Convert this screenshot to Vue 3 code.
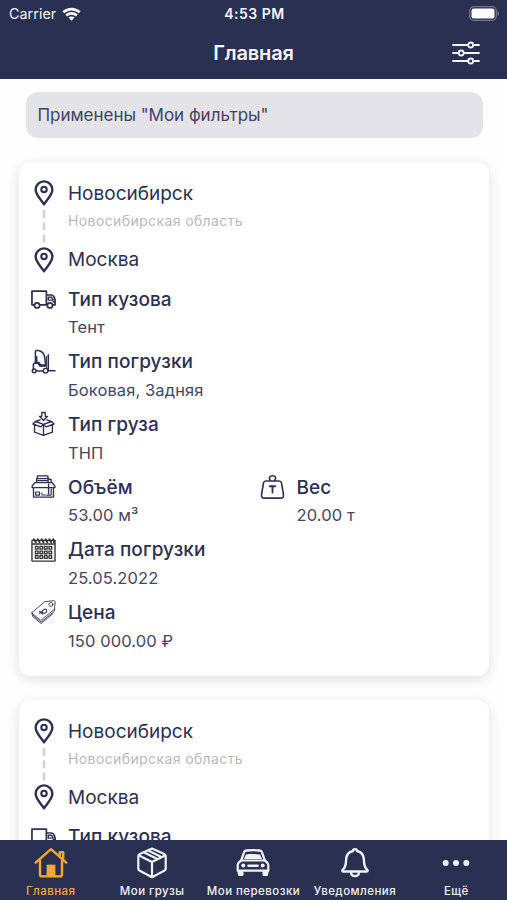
<script setup>
const cards = [1, 2]

const rows = [
  [{ icon: 'truck', label: 'Тип кузова', value: 'Тент' }],
  [{ icon: 'forklift', label: 'Тип погрузки', value: 'Боковая, Задняя' }],
  [{ icon: 'cargo', label: 'Тип груза', value: 'ТНП' }],
  [
    { icon: 'volume', label: 'Объём', value: '53.00 м³' },
    { icon: 'weight', label: 'Вес', value: '20.00 т' },
  ],
  [{ icon: 'calendar', label: 'Дата погрузки', value: '25.05.2022' }],
  [{ icon: 'price', label: 'Цена', value: '150 000.00 ₽' }],
]

const tabs = [
  { icon: 'home', label: 'Главная', active: true },
  { icon: 'box', label: 'Мои грузы' },
  { icon: 'car', label: 'Мои перевозки' },
  { icon: 'bell', label: 'Уведомления' },
  { icon: 'more', label: 'Ещё' },
]

// The last card runs under the tab bar, so only its first row is rendered.
const rowsOf = (card) => (card === cards.length ? rows.slice(0, 1) : rows)
</script>

<template>
  <div class="screen">
    <svg class="sprite" aria-hidden="true">
      <symbol id="pin" viewBox="0 0 20 26">
        <path d="M10 24.2C6.8 19.6 1.6 14.4 1.6 9.8a8.4 8.4 0 0 1 16.8 0c0 4.600-5.200 9.800-8.400 14.400z" stroke-width="2.4" />
        <circle cx="10" cy="9.400" r="2.700" stroke-width="2.1" />
      </symbol>
      <symbol id="truck" viewBox="0 0 26 26">
        <path d="M3.600 18H1V3.800h15V18H9M16 7.800h5.300c1.800 0 3.700 3 3.700 5.200V18h-2.300M16 18h.8" />
        <path d="M18 10.200h3.500l1.600 2.900H18zM23 14.800h2" stroke-width="1.500" />
        <circle cx="6.300" cy="18.600" r="2.700" />
        <circle cx="19.700" cy="18.600" r="2.700" />
      </symbol>
      <symbol id="forklift" viewBox="0 0 26 26">
        <path d="M4.600 14V2.200C4.600 1 6 .8 7.600 1c4 .6 6 3.200 6.600 7l1 8.300" stroke-width="1.600" />
        <path d="M3 14.200h4l2.300 3H15M2.500 21v-6M18 5.600v16M5.500 22.400h7.300M18 22h7" stroke-width="1.600" />
        <path d="M5.600 8v5.800h2.200l2 2.600h4" stroke-width="2.300" />
        <path d="M16.200 7v13" stroke-width="1" />
        <circle cx="3.300" cy="22.200" r="2" stroke-width="1.500" />
        <circle cx="15.200" cy="22" r="2.400" stroke-width="1.500" />
      </symbol>
      <symbol id="cargo" viewBox="0 0 26 26">
        <path d="M11.200 1h3.600v4h2.400L13 9.300 8.800 5h2.400z" />
        <path d="M9.500 8.800 4.600 10.400l8.400 3 8.400-3-4.900-1.600M4.600 10.400 2 13l8.300 3 2.700-2.600 2.700 2.600 8.300-3-2.600-2.600M3.700 14v7.500l9.300 3.300 9.300-3.300V14M13 13.400v11.400" />
      </symbol>
      <symbol id="volume" viewBox="0 0 26 26">
        <path d="M5.800 8V4.300h12V8M6.600 4.300V1.500h11v2.800M17.800 4.300l3.200 1V8M7 6.300h10" />
        <path d="M4 8.500h18l2.800 3.500v1.700H1.200V12zM2.600 13.700v9.800h20.800v-9.800M18.300 10v10" />
        <path d="M4.800 18.200h4v3.200h-4zM10.500 19.500h1M11 21.300h4M21 15v6M16.500 21.500h4" stroke-width="1.200" />
      </symbol>
      <symbol id="weight" viewBox="0 0 26 26">
        <path d="M6 6.800h14c1.600 0 2.100.8 2.400 2.100l2 12c.3 2.300-.7 3.700-2.800 3.700H4.400c-2.100 0-3.100-1.400-2.800-3.700l2-12C3.900 7.600 4.400 6.800 6 6.800z" stroke-width="1.700" />
        <path d="M11 6.500C8.300 3.500 10.200 1.300 13 1.300s4.700 2.200 2 5.200" stroke-width="1.700" />
        <path d="M10.100 12.200h5.800M13 12.200v6.600" stroke-width="1.900" />
      </symbol>
      <symbol id="calendar" viewBox="0 0 26 26">
        <path d="M1 3h24v21.500H1zM1 6.800h24" stroke-width="1.400" />
        <path d="M3 1.800l2 3M7 1.800l2 3M11 1.800l2 3M15 1.800l2 3M19 1.800l2 3M23 1.800l1 3" stroke-width="2" />
        <path
          d="M4.600 9.300h2.800v2.800H4.600zM9.300 9.300h2.800v2.800H9.300zM14 9.300h2.800v2.800H14zM18.700 9.300h2.800v2.800h-2.800zM4.600 14.100h2.800v2.800H4.600zM9.300 14.100h2.800v2.800H9.300zM14 14.100h2.800v2.800H14zM18.700 14.100h2.800v2.800h-2.800zM4.600 18.900h2.800v2.800H4.600zM9.300 18.900h2.800v2.800H9.300zM14 18.900h2.800v2.800H14zM18.700 18.900h2.800v2.800h-2.800z"
          stroke-width="1.400"
        />
      </symbol>
      <symbol id="price" viewBox="0 0 26 26">
        <path d="M1 13.500 14.500 2.200l9.500-1 1.200 1L24.500 10 10.500 21.500z" />
        <path d="M1 13.500v2l9.500 8 14-11.500v-2M1.500 16.500v1l9 7.500L23 14.500" />
        <circle cx="20.700" cy="5.200" r="2.100" />
        <path d="m8.800 14.400 5-4.200c2.400-1 3.600 2.300 1.600 3.500-1.500 1.300-3.600.3-4.200-1.300M8.800 12.200l3.600 3.200" stroke-width="1.100" />
      </symbol>
      <symbol id="home" viewBox="0 0 34 32">
        <path d="M1.700 15.700 17 2.200l15.300 13.500M25.800 10V5.300h3.400v7.700M6 14v13.500c0 1.200.6 1.900 1.900 1.900h18.200c1.300 0 1.900-.7 1.900-1.900V14" stroke-width="2.400" />
        <path d="M13 29V18h8v11z" fill="currentColor" stroke-width=".8" />
      </symbol>
      <symbol id="box" viewBox="0 0 32 32">
        <path d="M16 1.600 28.200 7c1 .5 1.500 1.100 1.500 2.200v12.500c0 1-.5 1.600-1.500 2.100L16 30.200 3.800 23.800c-1-.5-1.500-1.100-1.500-2.100V9.200c0-1.100.5-1.700 1.500-2.200z" stroke-width="2.200" />
        <path d="M3 8.500 16 15l13-6.500M16 15v15M8.300 5.600l13 6.500M12.300 3.600l13 6.500" stroke-width="2.200" />
      </symbol>
      <symbol id="car" viewBox="0 0 34 32">
        <path d="M5.200 13.500 8 5.300C8.400 4 9.300 3.600 10.500 3.500c4-.5 9-.5 13 0 1.200.1 2.100.5 2.500 1.800l2.800 8.200" stroke-width="2.300" />
        <path d="M8 12 10 7.500c4.500-.6 9.500-.6 14 0L26 12z" fill="currentColor" stroke="none" />
        <path d="M5 13.500h24c2 1.500 3.300 3 3.300 4.800v5.400H1.700v-5.400c0-1.800 1.300-3.300 3.300-4.800z" stroke-width="2.200" />
        <path d="M1 23h6.500v4.500c0 1-.6 1.500-1.600 1.500H3.500c-1 0-1.500-.5-1.500-1.500zM33 23h-6.500v4.500c0 1 .6 1.500 1.600 1.500h2.400c1 0 1.500-.5 1.500-1.500z" fill="currentColor" stroke="none" />
        <path d="M12.500 18.800h9" stroke-width="2.600" />
        <circle cx="7.300" cy="18.500" r="2" fill="currentColor" stroke="none" />
        <circle cx="26.700" cy="18.500" r="2" fill="currentColor" stroke="none" />
      </symbol>
      <symbol id="bell" viewBox="0 0 32 32">
        <path d="M14 4c0-2.500 4-2.500 4 0 4.800.9 7 4.600 7 9.500 0 5 1 7.300 3.300 9.300.7.800.3 1.700-.7 1.700H4.400c-1 0-1.400-.9-.7-1.700C6 20.800 7 18.500 7 13.500 7 8.600 9.200 4.900 14 4z" stroke-width="2.400" />
        <path d="M12 25.500c.4 4.800 7.600 4.800 8 0" stroke-width="2.400" />
      </symbol>
      <symbol id="more" viewBox="0 0 32 32">
        <g fill="currentColor" stroke="none">
          <circle cx="5.700" cy="16" r="3" />
          <circle cx="16" cy="16" r="3" />
          <circle cx="26.300" cy="16" r="3" />
        </g>
      </symbol>
    </svg>

    <header class="header">
      <div class="status">
        <div class="carrier">
          <span>Carrier</span>
          <svg class="wifi" viewBox="0 0 19 14">
            <path d="M1.300 5.300c4.700-4.300 11.700-4.300 16.400 0M4.200 8.400c3-2.800 7.600-2.800 10.600 0" />
            <path class="wifi-dot" d="M6.500 10.600c1.700-1.500 4.300-1.500 6 0l-3 3.100z" />
          </svg>
        </div>
        <span class="time">4:53 PM</span>
        <svg class="battery" viewBox="0 0 31 15">
          <rect class="battery-case" x=".7" y=".7" width="26.600" height="13.600" rx="4" />
          <rect class="battery-level" x="2.500" y="2.500" width="23" height="10" rx="2.300" />
          <path class="battery-cap" d="M28.500 5c2 .7 2 4.300 0 5z" />
        </svg>
      </div>
      <div class="titlebar">
        <h1>Главная</h1>
        <svg class="filters" viewBox="0 0 28 24">
          <path d="M1 4h15M21.500 4H27M1 12h5.500M12 12h15M1 20h15M21.500 20H27" />
          <circle cx="18.700" cy="4" r="2.500" />
          <circle cx="9.200" cy="12" r="2.500" />
          <circle cx="18.700" cy="20" r="2.500" />
        </svg>
      </div>
    </header>

    <main class="content">
      <div class="notice">Применены "Мои фильтры"</div>
      <article v-for="card in cards" :key="card" class="card">
        <div class="route">
          <div class="track">
            <svg class="pin"><use href="#pin" /></svg>
            <svg class="dash" viewBox="0 0 4 34"><path d="M2 1v8M2 13.500v7.500M2 25.500v8" /></svg>
            <svg class="pin"><use href="#pin" /></svg>
          </div>
          <div class="places">
            <div class="city">Новосибирск</div>
            <div class="region">Новосибирская область</div>
            <div class="city">Москва</div>
          </div>
        </div>
        <div v-for="(row, i) in rowsOf(card)" :key="i" class="row">
          <div v-for="item in row" :key="item.icon" class="item">
            <svg class="icon" :class="item.icon"><use :href="'#' + item.icon" /></svg>
            <div>
              <div class="label">{{ item.label }}</div>
              <div v-if="card < cards.length" class="value">{{ item.value }}</div>
            </div>
          </div>
        </div>
      </article>
    </main>

    <nav class="tabs">
      <div v-for="tab in tabs" :key="tab.icon" class="tab" :class="{ active: tab.active }">
        <svg class="tab-icon"><use :href="'#' + tab.icon" /></svg>
        <span>{{ tab.label }}</span>
      </div>
    </nav>
  </div>
</template>

<style>
body {
  background: #fff;
}
</style>

<style scoped>
.screen {
  display: flex;
  flex-direction: column;
  height: 900px;
  overflow: hidden;
  font-family: Inter, "Liberation Sans", sans-serif;
  color: #2d3050;
  background: #fefefe;
}
.sprite {
  position: absolute;
  width: 0;
  height: 0;
}
svg {
  display: block;
  flex: none;
  fill: none;
  stroke: currentColor;
  stroke-linecap: round;
  stroke-linejoin: round;
}
.header {
  flex: none;
  box-sizing: border-box;
  height: 79px;
  background: #2a304f;
  color: #f4f5fb;
}
.status {
  display: grid;
  grid-template-columns: 1fr auto 1fr;
  align-items: center;
  height: 27px;
  padding: 0 7px 0 9px;
}
.carrier {
  display: flex;
  align-items: center;
  gap: 6px;
  font-size: 14.300px;
  letter-spacing: 0.05px;
}
.wifi {
  width: 19px;
  height: 14px;
  stroke-width: 2.700;
  stroke-linecap: butt;
}
.wifi-dot {
  fill: currentColor;
  stroke: none;
}
.time {
  font-size: 14px;
  font-weight: 600;
  letter-spacing: 0.5px;
}
.battery {
  width: 31px;
  height: 15px;
  justify-self: end;
}
.battery-case {
  stroke: #73768f;
  stroke-width: 1.200;
}
.battery-level {
  fill: #fff;
  stroke: none;
}
.battery-cap {
  fill: #73768f;
  stroke: none;
}
.titlebar {
  display: grid;
  grid-template-columns: 1fr auto 1fr;
  align-items: center;
  height: 51px;
  padding: 0 27px;
}
h1 {
  grid-column: 2;
  margin: 0;
  font-size: 20px;
  font-weight: 600;
  line-height: 24px;
  letter-spacing: -0.15px;
}
.filters {
  width: 28px;
  height: 24px;
  justify-self: end;
  stroke-width: 1.800;
}
.content {
  flex: 1;
  min-height: 0;
  overflow: hidden;
  padding: 13px 18px 0 19px;
}
.notice {
  margin: 0 6.500px 24.500px;
  padding: 0 12px;
  height: 45.500px;
  line-height: 46px;
  border-radius: 12px;
  background: #e4e3e8;
  color: #42435f;
  font-size: 17px;
  letter-spacing: -0.02px;
}
.card {
  box-sizing: border-box;
  height: 513.500px;
  margin-bottom: 24px;
  padding: 17px 12px 0;
  border-radius: 12px;
  background: #fff;
  box-shadow: 0 3px 14px rgba(0, 0, 0, 0.12);
}
.route {
  display: flex;
  gap: 12px;
  height: 106px;
}
.track {
  display: flex;
  flex-direction: column;
  align-items: center;
  width: 25px;
}
.pin {
  width: 20px;
  height: 26px;
  margin-top: 1px;
}
.dash {
  width: 4px;
  height: 34px;
  margin: 3px 0;
  stroke: #d2d2d4;
  stroke-width: 2.500;
  stroke-linecap: butt;
}
.places {
  padding-top: 1px;
}
.city {
  height: 28px;
  line-height: 28px;
  font-size: 19px;
  letter-spacing: 0;
}
.region {
  height: 38px;
  line-height: 26px;
  color: #b8b8ba;
  font-size: 14px;
  letter-spacing: 0.39px;
}
.track .pin:last-child {
  margin-top: 0.500px;
}
.row {
  display: grid;
  grid-template-columns: 228.500px 1fr;
  height: 62.700px;
}
.item {
  display: flex;
  gap: 12px;
}
.icon {
  width: 25px;
  height: 26px;
  margin-top: 1px;
  stroke-width: 1.400;
}
.truck {
  stroke-width: 1.800;
  margin-top: 2px;
}
.price {
  stroke-width: 0.900;
}
.calendar {
  color: #333;
}
.label {
  height: 27.500px;
  padding-top: 0.700px;
  line-height: 28px;
  font-size: 19px;
  font-weight: 500;
  letter-spacing: 0.08px;
}
.value {
  line-height: 28px;
  font-size: 16.500px;
  color: #454660;
  letter-spacing: 0.1px;
}
.tabs {
  flex: none;
  display: grid;
  grid-template-columns: repeat(5, 1fr);
  height: 60px;
  background: #2a304f;
  color: #f1f2f8;
}
.tab {
  display: flex;
  flex-direction: column;
  align-items: center;
  gap: 4px;
  padding-top: 7px;
  font-size: 11.500px;
  font-weight: 500;
  line-height: 16px;
  letter-spacing: 0.45px;
  white-space: nowrap;
}
.tab-icon {
  width: 34px;
  height: 32px;
}
.active {
  color: #f5a930;
}
</style>
